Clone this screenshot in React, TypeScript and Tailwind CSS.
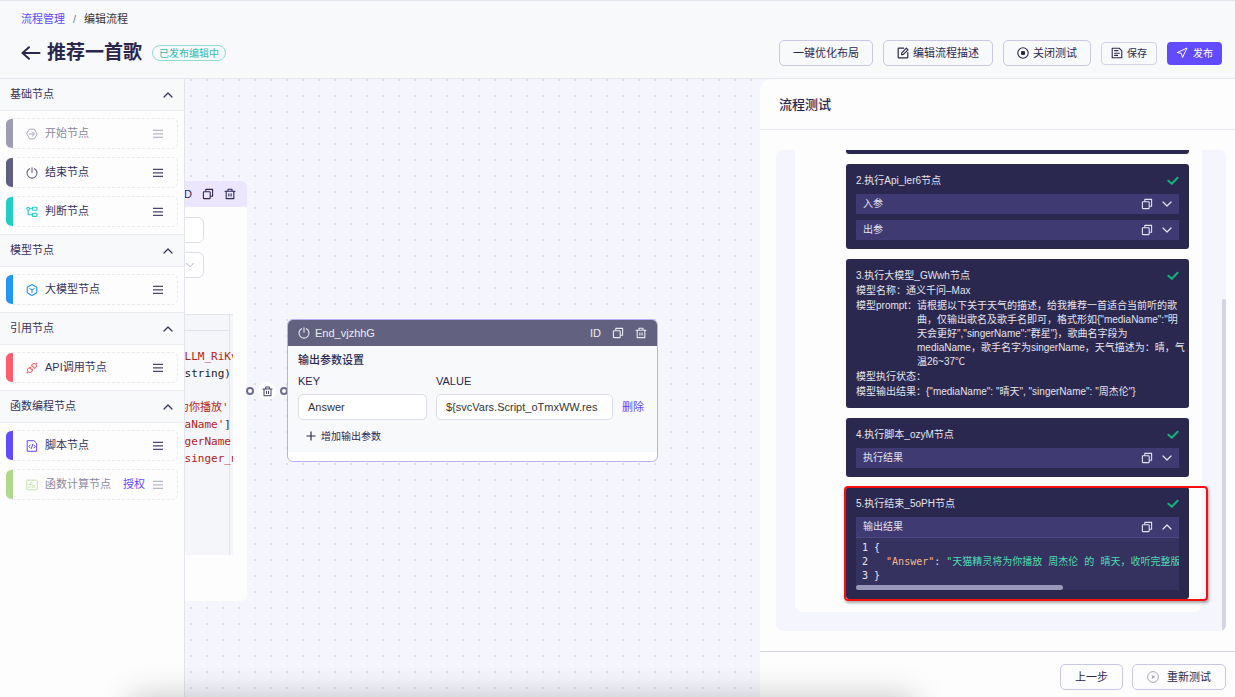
import { ReactNode } from "react";
import { AiOutlineApi } from "react-icons/ai";
import { ChevronDown, ChevronUp, Navigation, Plus } from "lucide-react";

type IconProps = { className?: string };

const BackIcon = () => (
  <svg viewBox="0 0 20 16" className="h-4 w-5" fill="none" stroke="currentColor" strokeWidth="2" strokeLinecap="round" strokeLinejoin="round">
    <path d="M1.5 8H18.5M8 2.2L1.5 8L8 13.8" />
  </svg>
);

const CopyIcon = ({ className = "size-3" }: IconProps) => (
  <svg viewBox="0 0 12 12" className={className} fill="none" stroke="currentColor" strokeWidth="1.1" strokeLinejoin="round">
    <rect x="1.4" y="3.8" width="6.8" height="6.8" rx="0.6" />
    <path d="M3.8 3.6V1.4H10.6V8.2H8.4" />
  </svg>
);

const TrashIcon = ({ className = "size-3" }: IconProps) => (
  <svg viewBox="0 0 12 12" className={className} fill="none" stroke="currentColor" strokeWidth="1.1" strokeLinecap="round" strokeLinejoin="round">
    <path d="M1 3.3H11M4 3V1.2H8V3M2.2 3.5V10.6H9.8V3.5M4.9 5.8V8.1M7.1 5.8V8.1" />
  </svg>
);

const PowerIcon = ({ className = "size-3" }: IconProps) => (
  <svg viewBox="0 0 12 12" className={className} fill="none" stroke="currentColor" strokeWidth="1.1" strokeLinecap="round">
    <path d="M6 0.8V5.2M3.6 1.7A5 5 0 1 0 8.4 1.7" />
  </svg>
);

const StartIcon = () => (
  <svg viewBox="0 0 12 12" className="size-3" fill="none" stroke="currentColor" strokeWidth="1" strokeLinecap="round" strokeLinejoin="round">
    <path d="M3.6 1.2H8.4L11.2 6L8.4 10.8H3.6L0.8 6Z" />
    <path d="M3.4 6H8.2M6.4 4L8.4 6L6.4 8" />
  </svg>
);

const BranchIcon = () => (
  <svg viewBox="0 0 12 12" className="size-3" fill="none" stroke="currentColor" strokeWidth="1.1" strokeLinejoin="round">
    <circle cx="2.2" cy="2.8" r="1.4" />
    <rect x="6.4" y="1.3" width="4.6" height="3" rx="0.6" />
    <rect x="6.4" y="7.2" width="4.6" height="3.2" rx="0.6" />
    <path d="M3.6 2.8H6.4M2.2 4.2V8.8H6.4" />
  </svg>
);

const ModelIcon = () => (
  <svg viewBox="0 0 12 12" className="size-3" fill="none" stroke="currentColor" strokeWidth="1.1" strokeLinecap="round" strokeLinejoin="round">
    <path d="M6 0.6L10.8 3.3V8.7L6 11.4L1.2 8.7V3.3Z" />
    <path d="M3.8 4.6L6 5.9L8.2 4.6M6 5.9V8.4" />
  </svg>
);

const ScriptIcon = () => (
  <svg viewBox="0 0 12 12" className="size-3" fill="none" stroke="currentColor" strokeWidth="1" strokeLinecap="round" strokeLinejoin="round">
    <path d="M1.6 0.7H8L10.6 3.2V11.3H1.6Z" />
    <path d="M4.2 5L2.9 6.5L4.2 8M7.9 5L9.2 6.5L7.9 8M6.6 4.4L5.5 8.4" />
  </svg>
);

const FunctionIcon = () => (
  <svg viewBox="0 0 12 12" className="size-3" fill="none" stroke="currentColor" strokeWidth="1" strokeLinecap="round">
    <rect x="0.7" y="1.2" width="10.6" height="9.6" rx="0.8" />
    <path d="M5.6 3.4C4.2 3.2 4.4 4.6 4.2 6.2C4 8 3.8 8.8 2.6 8.6M3 5.4H5.4M6.4 5.8L8.8 8.6M8.8 5.8L6.4 8.6" />
  </svg>
);

const MenuIcon = () => (
  <svg viewBox="0 0 10 10" className="size-2.5" stroke="currentColor" strokeWidth="1.2">
    <path d="M0 1.4H10M0 4.9H10M0 8.4H10" />
  </svg>
);

const EditIcon = () => (
  <svg viewBox="0 0 12 12" className="size-3" fill="none" stroke="currentColor" strokeWidth="1.2" strokeLinecap="round" strokeLinejoin="round">
    <path d="M6.6 1.2H1.8Q1.2 1.2 1.2 1.8V10.2Q1.2 10.8 1.8 10.8H10.2Q10.8 10.8 10.8 10.2V5.6" />
    <path d="M4.6 7.6L4.8 5.8L9.4 1.2L11 2.8L6.4 7.4Z" />
  </svg>
);

const RecordIcon = () => (
  <svg viewBox="0 0 12 12" className="size-3" fill="none" stroke="currentColor" strokeWidth="1.1">
    <circle cx="6" cy="6" r="5.2" />
    <rect x="4" y="4" width="4" height="4" rx="1" fill="currentColor" stroke="none" />
  </svg>
);

const SaveIcon = () => (
  <svg viewBox="0 0 12 12" className="size-3" fill="none" stroke="currentColor" strokeWidth="1.1" strokeLinecap="round" strokeLinejoin="round">
    <path d="M1.2 1.2H8.2L10.8 3.8V10.8H1.2Z" />
    <path d="M3.6 3.6H7M3.6 6.2H8.4M3.6 8.4H6.6" />
  </svg>
);

const PlayIcon = () => (
  <svg viewBox="0 0 12 12" className="size-3" fill="none" stroke="currentColor" strokeWidth="1">
    <circle cx="6" cy="6" r="5.4" />
    <path d="M4.8 4L8.2 6L4.8 8Z" fill="currentColor" stroke="none" />
  </svg>
);

const CheckIcon = () => (
  <svg viewBox="0 0 12 10" className="h-2.5 w-3" fill="none" stroke="#12b07c" strokeWidth="2.1" strokeLinecap="round" strokeLinejoin="round">
    <path d="M1.4 4.8L4.8 7.8L10.6 1.8" />
  </svg>
);

type NodeItem = {
  label: string;
  icon: ReactNode;
  bar: string;
  color: string;
  disabled?: boolean;
  auth?: boolean;
};

const sections: { title: string; items: NodeItem[] }[] = [
  {
    title: "基础节点",
    items: [
      { label: "开始节点", icon: <StartIcon />, bar: "bg-[#9d9cb2]", color: "text-[#a9a8ba]", disabled: true },
      { label: "结束节点", icon: <PowerIcon />, bar: "bg-[#605e80]", color: "text-[#605e80]" },
      { label: "判断节点", icon: <BranchIcon />, bar: "bg-[#22cfc8]", color: "text-[#22cfc8]" },
    ],
  },
  {
    title: "模型节点",
    items: [{ label: "大模型节点", icon: <ModelIcon />, bar: "bg-[#2196f3]", color: "text-[#2196f3]" }],
  },
  {
    title: "引用节点",
    items: [{ label: "API调用节点", icon: <AiOutlineApi className="size-3.5 shrink-0" />, bar: "bg-[#ff5c6c]", color: "text-[#ff5c6c]" }],
  },
  {
    title: "函数编程节点",
    items: [
      { label: "脚本节点", icon: <ScriptIcon />, bar: "bg-[#624aff]", color: "text-[#624aff]" },
      { label: "函数计算节点", icon: <FunctionIcon />, bar: "bg-[#b0d98b]", color: "text-[#c5e3a9]", disabled: true, auth: true },
    ],
  },
];

const HeaderButton = ({ children }: { children: ReactNode }) => (
  <button className="flex h-[26px] items-center gap-1 rounded-[5px] border border-[#c9c6e6] px-[13px] text-[11px] whitespace-nowrap">
    {children}
  </button>
);

const Header = () => (
  <header className="border-y border-[#e6e7ee] bg-[#f8f9fb] pt-2.5 pr-[13px] pb-3 pl-[21px]">
    <nav className="mb-[13px] flex h-4 items-center gap-2 text-[11px]">
      <a href="#" className="text-[#624aff]">流程管理</a>
      <span className="text-[#77778a]">/</span>
      <span className="text-[#333]">编辑流程</span>
    </nav>
    <div className="flex h-[26px] items-center justify-between">
      <div className="flex items-center">
        <button aria-label="返回" className="mr-1.5">
          <BackIcon />
        </button>
        <h1 className="mr-2.5 text-[19px] leading-[26px] font-bold whitespace-nowrap">推荐一首歌</h1>
        <span className="flex h-4 items-center rounded-full border border-[#8fdcd4] px-1.5 text-[10px] whitespace-nowrap text-[#35b9ae]">
          已发布编辑中
        </span>
      </div>
      <div className="flex items-center gap-2.5">
        <HeaderButton>一键优化布局</HeaderButton>
        <HeaderButton>
          <EditIcon />
          编辑流程描述
        </HeaderButton>
        <HeaderButton>
          <RecordIcon />
          关闭测试
        </HeaderButton>
        <button className="flex h-[23px] items-center gap-1 rounded-sm border border-[#d3d1ea] px-[9px] text-[10px] whitespace-nowrap">
          <SaveIcon />
          保存
        </button>
        <button className="flex h-[23px] items-center gap-[5px] rounded-sm bg-[#624aff] px-[9px] text-[10px] whitespace-nowrap text-white">
          <Navigation className="size-3" strokeWidth={2} />
          发布
        </button>
      </div>
    </div>
  </header>
);

const Sidebar = () => (
  <aside className="z-10 w-[185px] shrink-0 border-r border-[#e4e5ec] bg-[#fdfdfe] text-[#35325a]">
    {sections.map((section) => (
      <section key={section.title} className="not-first:border-t not-first:border-[#eaebf0]">
        <button className="flex h-8 w-full items-center justify-between border-b border-[#eaebf0] bg-[#f8f9fb] pr-2 pl-2.5 text-[11px]">
          {section.title}
          <ChevronUp className="size-4" strokeWidth={1.8} />
        </button>
        <ul className="flex flex-col gap-2 px-1.5 py-[7px]">
          {section.items.map((item) => (
            <li
              key={item.label}
              className="flex h-[31px] items-center overflow-hidden rounded-md border border-l-0 border-dashed border-[#e9e9ef] pr-3.5 text-[11px]"
            >
              <span className={`mr-[13px] h-8 w-[7px] shrink-0 ${item.bar}`} />
              <span className={`mr-[7px] flex w-3 justify-center ${item.color}`}>{item.icon}</span>
              <span className={item.disabled ? "text-[#8b8a9e]" : ""}>{item.label}</span>
              <span className="ml-auto flex items-center gap-2">
                {item.auth && <a href="#" className="text-[#624aff]">授权</a>}
                <span className={item.disabled ? "text-[#b9b8c8]" : "text-[#4a4770]"}>
                  <MenuIcon />
                </span>
              </span>
            </li>
          ))}
        </ul>
      </section>
    ))}
  </aside>
);

const ScriptNode = () => (
  <div className="absolute top-[102px] -left-[30px] h-[420px] w-[92px] overflow-hidden rounded-md bg-[#fdfdfe]">
    <div className="flex h-[26px] items-center justify-end gap-2.5 bg-[#ebe5fd] pr-[11px] text-[11px]">
      <span>ID</span>
      <button aria-label="复制节点"><CopyIcon /></button>
      <button aria-label="删除节点"><TrashIcon /></button>
    </div>
    <div className="pt-2.5 pr-[43px]">
      <input aria-label="参数名" className="block h-[26px] w-full rounded-md border border-[#dcdde6] bg-white" />
      <button aria-label="参数类型" className="mt-[9px] flex h-[26px] w-full items-center justify-end rounded-md border border-[#dcdde6] bg-white pr-1.5 text-[#a9a8ba]">
        <ChevronDown className="size-3.5" strokeWidth={1.5} />
      </button>
    </div>
    <div className="mt-9 mr-3.5 h-[241px] overflow-hidden border-t border-[#e1e3ea] bg-[#f5f6fa] pl-[23px]">
      <div className="mr-[3px] h-full border-r border-[#e1e3ea] pt-[15px]">
        <pre className="border-t border-[#e1e3ea] pt-[17px] font-['DejaVu_Sans_Mono','Noto_Sans_CJK_SC',monospace] text-[11px] leading-[17px] text-[#b02323]">
          <div>_LLM_RiKv</div>
          <div className="text-[#222]"> string)</div>
          <div className="h-[17px]" />
          <div>为你播放'</div>
          <div>iaName'<span className="text-[#222]">]</span></div>
          <div>ngerName'</div>
          <div> singer_n</div>
        </pre>
      </div>
    </div>
  </div>
);

const EndNode = () => (
  <div className="absolute top-[240px] left-[102px] w-[371px] overflow-hidden rounded-md border border-[#b9aef8] bg-white">
    <div className="flex h-[26px] items-center gap-[11px] bg-[#62617f] px-2.5 text-[11px] text-[#ececf4]">
      <span className="mr-auto flex items-center gap-[5px]">
        <PowerIcon />
        End_vjzhhG
      </span>
      <span>ID</span>
      <button aria-label="复制节点"><CopyIcon /></button>
      <button aria-label="删除节点"><TrashIcon /></button>
    </div>
    <div className="mb-[9px] bg-[#f8f9fb] pt-1.5 pb-2 pl-2.5 text-[11px]">
      <h3 className="h-4 leading-4 font-medium">输出参数设置</h3>
      <div className="mt-[5px] flex items-end gap-[9px]">
        <label className="w-[129px] leading-4">
          KEY
          <input className="mt-[5px] block h-[26px] w-full rounded-[5px] border border-[#dcdde6] bg-white px-[9px] text-[#333]" defaultValue="Answer" />
        </label>
        <label className="w-[177px] leading-4">
          VALUE
          <input className="mt-[5px] block h-[26px] w-full rounded-[5px] border border-[#dcdde6] bg-white px-[9px] text-[#333]" defaultValue="${svcVars.Script_oTmxWW.res" />
        </label>
        <button className="h-[26px] text-[#624aff]">删除</button>
      </div>
      <button className="mt-2 ml-1.5 flex h-4 items-center gap-[3px] text-[10px]">
        <Plus className="size-3.5" strokeWidth={2} />
        增加输出参数
      </button>
    </div>
  </div>
);

const Canvas = () => (
  <main className="relative min-w-0 flex-1 overflow-hidden bg-[#f5f6fd] bg-[radial-gradient(circle,#dadbe4_1px,transparent_1px)] bg-[size:16px_16px] bg-[position:-2px_-7px]">
    <ScriptNode />
    <div className="absolute top-[303px] left-[61px] flex w-[42px] items-center justify-between text-[#45426a]">
      <span className="size-2 rounded-full border-2 border-[#6f6d8c] bg-white" />
      <button aria-label="删除连线" className="flex size-[18px] items-center justify-center rounded-full bg-white">
        <TrashIcon className="size-[11px]" />
      </button>
      <span className="size-2 rounded-full border-2 border-[#6f6d8c] bg-white" />
    </div>
    <EndNode />
  </main>
);

const ResultRow = ({ label, open }: { label: string; open?: boolean }) => (
  <div className="flex h-5 items-center gap-1.5 bg-[#3f3a72] pr-1 pl-[7px]">
    <span className="mr-auto">{label}</span>
    <button aria-label={`复制${label}`}><CopyIcon /></button>
    <button aria-label={`展开${label}`}>
      {open ? <ChevronUp className="size-4" strokeWidth={1.8} /> : <ChevronDown className="size-4" strokeWidth={1.8} />}
    </button>
  </div>
);

const StepCard = ({ title, children }: { title: string; children: ReactNode }) => (
  <article className="relative rounded-[3px] bg-[#2b284f] px-2.5 pt-2.5 pb-[9px] text-[10px] leading-[14px] text-[#e4e4ee]">
    <div className="flex items-center justify-between">
      <h3>{title}</h3>
      <CheckIcon />
    </div>
    {children}
  </article>
);

const promptLines = [
  "请根据以下关于天气的描述，给我推荐一首适合当前听的歌",
  "曲，仅输出歌名及歌手名即可，格式形如{\"mediaName\":\"明",
  "天会更好\",\"singerName\":\"群星\"}，歌曲名字段为",
  "mediaName，歌手名字为singerName，天气描述为：晴，气",
  "温26~37℃",
];

const TestPanel = () => (
  <section className="flex w-[475px] shrink-0 flex-col rounded-tl-xl bg-[#fdfdfe]">
    <h2 className="h-[51px] shrink-0 border-b border-[#e6e7ee] pl-[19px] text-[13px] leading-[52px] font-medium">流程测试</h2>
    <div className="flex min-h-0 flex-1 py-5 pr-[9px] pl-4">
      <div className="flex min-w-0 flex-1 items-start justify-between overflow-hidden rounded-md bg-[#f5f6fd] pl-[19px]">
        <div className="mr-5 flex min-w-0 flex-1 flex-col gap-2.5 rounded-b-lg bg-[#fdfdfe] pr-[13px] pb-[13px] pl-[51px]">
          <div className="h-1 rounded-b-[3px] bg-[#2b284f]" />
          <StepCard title="2.执行Api_ler6节点">
            <div className="mt-1.5 flex flex-col gap-1.5">
              <ResultRow label="入参" />
              <ResultRow label="出参" />
            </div>
          </StepCard>
          <StepCard title="3.执行大模型_GWwh节点">
            <div className="mt-px flex flex-col gap-px whitespace-nowrap">
              <p>模型名称：通义千问–Max</p>
              <div className="flex">
                <span className="w-[61px] shrink-0">模型prompt：</span>
                <div>
                  {promptLines.map((line) => (
                    <p key={line}>{line}</p>
                  ))}
                </div>
              </div>
              <p>模型执行状态：</p>
              <p>模型输出结果：{'{"mediaName": "晴天", "singerName": "周杰伦"}'}</p>
            </div>
          </StepCard>
          <StepCard title="4.执行脚本_ozyM节点">
            <div className="mt-1.5">
              <ResultRow label="执行结果" />
            </div>
          </StepCard>
          <StepCard title="5.执行结束_5oPH节点">
            <div className="mt-1.5">
              <ResultRow label="输出结果" open />
              <div className="overflow-hidden border-t border-[#4c4880] bg-[#36325f] pt-[3px]">
                <div className="flex gap-1.5 pl-1.5 font-['DejaVu_Sans_Mono','Noto_Sans_CJK_SC',monospace]">
                  <div>
                    <div>1</div>
                    <div>2</div>
                    <div>3</div>
                  </div>
                  <pre className="font-[inherit]">
                    <div>{"{"}</div>
                    <div>
                      {"  "}
                      <span className="text-[#f2b98a]">"Answer"</span>:{" "}
                      <span className="text-[#4fdcb0]">"天猫精灵将为你播放 周杰伦 的 晴天，收听完整版请</span>
                    </div>
                    <div>{"}"}</div>
                  </pre>
                </div>
                <div className="mt-0.5 h-[5px] w-[64%] rounded-full bg-[#9a97b8]" />
              </div>
            </div>
            <div className="absolute -top-px -right-[19px] -bottom-0.5 -left-0.5 rounded-sm border-2 border-[#f50f0f] shadow-[1px_2px_3px_rgba(0,0,0,0.35)]" />
          </StepCard>
        </div>
        <div className="flex h-full w-1 flex-col justify-end">
          <div className="h-[69%] rounded-full bg-[#d4d5e4]" />
        </div>
      </div>
    </div>
    <footer className="flex shrink-0 justify-end gap-[9px] border-t border-[#d5d4e6] pt-3 pr-[9px] pb-[7px] text-[11px]">
      <button className="h-[26px] rounded-[5px] border border-[#c9c6e6] px-3.5">上一步</button>
      <button className="flex h-[26px] items-center gap-2 rounded-[5px] border border-[#c9c6e6] px-3.5">
        <span className="text-[#a9a8ba]">
          <PlayIcon />
        </span>
        重新测试
      </button>
    </footer>
  </section>
);

const App = () => {
  return (
    <div className="relative flex h-screen flex-col overflow-hidden bg-white font-['Liberation_Sans','Noto_Sans_CJK_SC',sans-serif] text-[#2b2850]">
      <Header />
      <div className="flex min-h-0 flex-1 bg-[#f5f6fd]">
        <Sidebar />
        <Canvas />
        <TestPanel />
      </div>
      <div className="absolute top-full right-[320px] left-[130px] z-20 h-20 shadow-[0_0_32px_rgba(0,0,0,0.22)]" />
    </div>
  );
};

export default App;
